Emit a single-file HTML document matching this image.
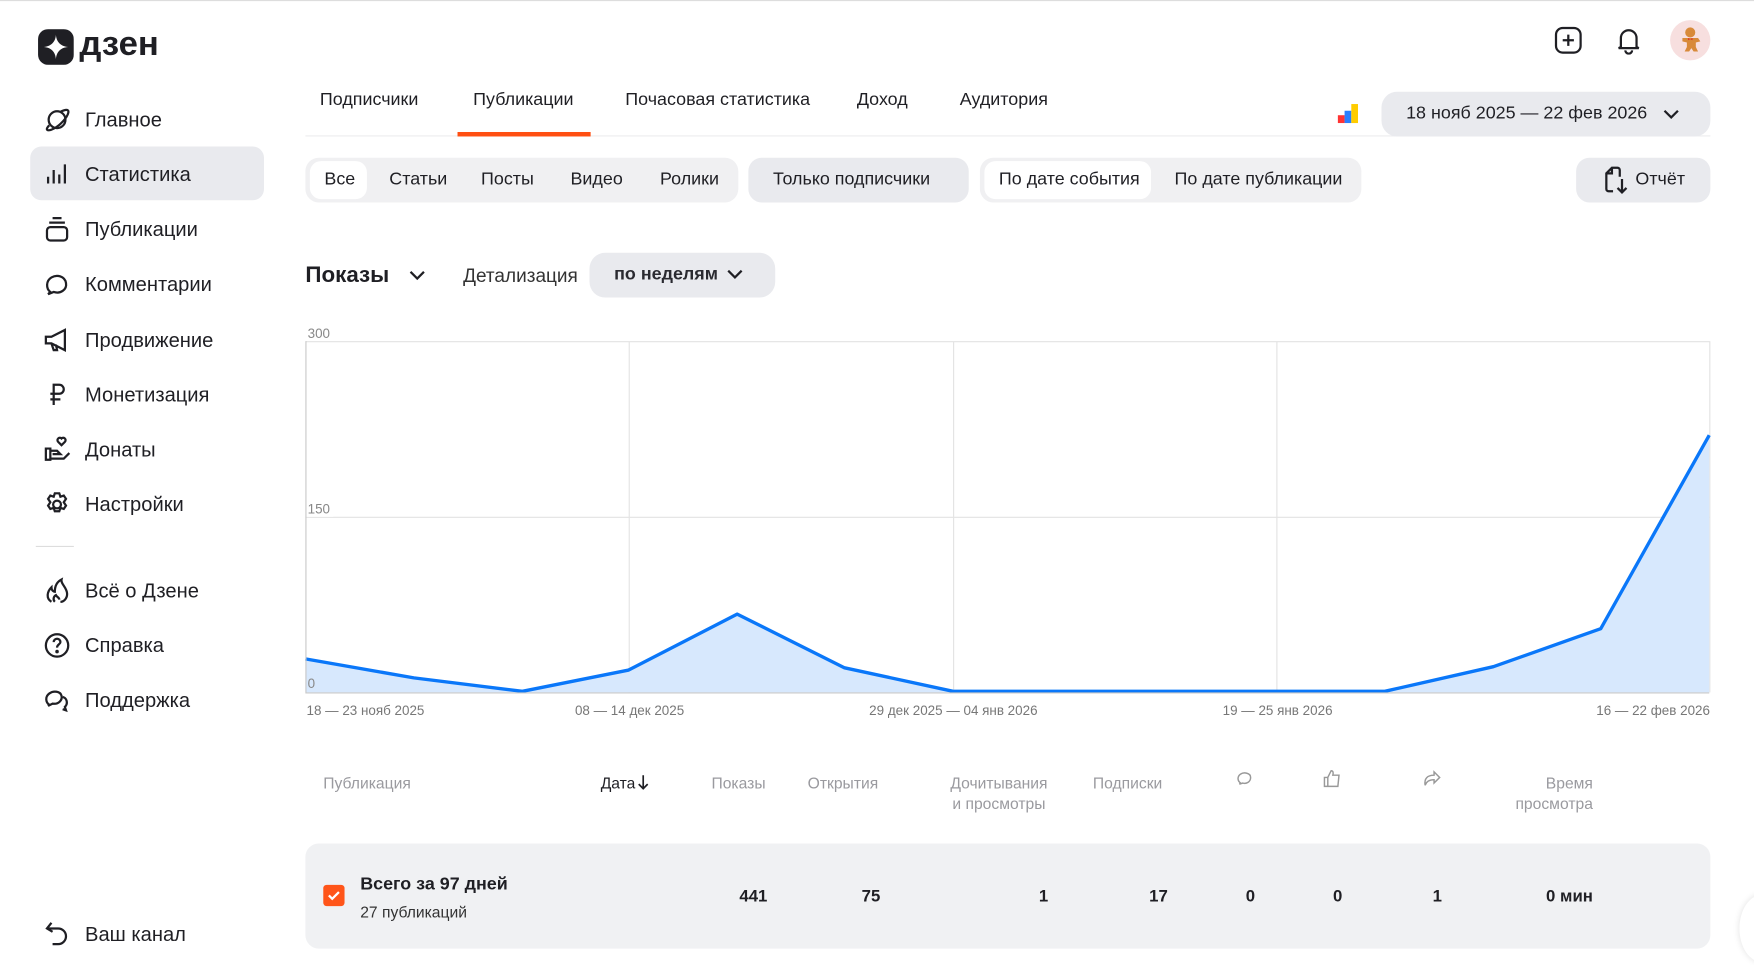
<!DOCTYPE html>
<html><head><meta charset="utf-8">
<style>
html,body{margin:0;padding:0;width:1754px;height:965px;overflow:hidden;background:#fff}
#st{position:absolute;left:0;top:0;width:1568px;height:863px;transform:scale(1.11862);transform-origin:0 0;font-family:"Liberation Sans","DejaVu Sans",sans-serif;color:#1f1f24}
.a{position:absolute;white-space:nowrap}
.nav{font-size:18px;line-height:22px}
.ic{position:absolute;width:26px;height:26px}
.tab{font-size:16px;top:80px;line-height:20px}
.f{font-size:16px;line-height:20px;top:151px}
.ax{font-size:12px;color:#777;top:628px}
.th{font-size:14px;color:#9a9a9f;line-height:18px}
.v{font-size:15px;font-weight:bold;top:793px;text-align:right}
</style></head><body><div id="st">
<div class="a" style="left:0;top:0;width:1568px;height:1px;background:#ddd"></div>
<svg class="a" style="left:34px;top:26px" width="32" height="32" viewBox="0 0 32 32"><rect width="32" height="32" rx="9" fill="#1f1f24"/><path d="M16 5C16.3 11.5 20.5 15.7 27 16C20.5 16.3 16.3 20.5 16 27C15.7 20.5 11.5 16.3 5 16C11.5 15.7 15.7 11.5 16 5Z" fill="#fff"/></svg>
<div class="a" style="left:71px;top:20px;font-size:31px;font-weight:bold;line-height:38px">дзен</div>
<div class="a" style="left:27px;top:131px;width:209px;height:48px;background:#e9eaee;border-radius:10px"></div>
<svg class="ic" style="left:38px;top:94px" viewBox="0 0 26 26" fill="none" stroke="#1f1f24" stroke-width="2"><circle cx="13" cy="13" r="7.5"/><path d="M6 18c-4 4-2 6 4 3s12-10 13-14-3-3-7-1"/></svg>
<div class="a nav" style="left:76px;top:96px">Главное</div>
<svg class="ic" style="left:38px;top:143px" viewBox="0 0 26 26" stroke="#1f1f24" stroke-width="2"><path d="M5 21v-6M10 21V9M15 21v-8M20 21V4"/></svg>
<div class="a nav" style="left:76px;top:145px">Статистика</div>
<svg class="ic" style="left:38px;top:192px" viewBox="0 0 26 26" fill="none" stroke="#1f1f24" stroke-width="2"><rect x="4" y="11" width="18" height="12" rx="3"/><path d="M6 7h14M9 3h8"/></svg>
<div class="a nav" style="left:76px;top:194px">Публикации</div>
<svg class="ic" style="left:38px;top:241px" viewBox="0 0 26 26" fill="none" stroke="#1f1f24" stroke-width="2"><path d="M7 20c-4-3-4-10 1-13s12-1 13 5-5 10-11 8l-5 2z"/></svg>
<div class="a nav" style="left:76px;top:243px">Комментарии</div>
<svg class="ic" style="left:38px;top:291px" viewBox="0 0 26 26" fill="none" stroke="#1f1f24" stroke-width="2"><path d="M3 10h5l12-6v18L8 16H3zM8 16l2 6h3l-1-5"/></svg>
<div class="a nav" style="left:76px;top:293px">Продвижение</div>
<svg class="ic" style="left:38px;top:340px" viewBox="0 0 26 26" fill="none" stroke="#1f1f24" stroke-width="2"><path d="M10 22V4h5a4 4 0 010 8H7M7 17h9"/></svg>
<div class="a nav" style="left:76px;top:342px">Монетизация</div>
<svg class="ic" style="left:38px;top:389px" viewBox="0 0 26 26" fill="none" stroke="#1f1f24" stroke-width="2"><path d="M3 12h4v10H3zM7 14h6l3 3H9M7 21h12l5-5M17 9l-3-3a2 2 0 013-3 2 2 0 013 3z"/></svg>
<div class="a nav" style="left:76px;top:391px">Донаты</div>
<svg class="ic" style="left:38px;top:438px" viewBox="0 0 26 26" fill="none" stroke="#1f1f24" stroke-width="2"><circle cx="13" cy="13" r="3.5"/><path d="M11 3h4l1 3 3-1 2 3-2 3 2 3-2 3-3-1-1 3h-4l-1-3-3 1-2-3 2-3-2-3 2-3 3 1z"/></svg>
<div class="a nav" style="left:76px;top:440px">Настройки</div>
<div class="a" style="left:32px;top:488px;width:34px;height:1px;background:#ddd"></div>
<svg class="ic" style="left:38px;top:515px" viewBox="0 0 26 26" fill="none" stroke="#1f1f24" stroke-width="2"><path d="M8 23c-5-3-4-9 0-13 0 3 2 4 3 4 0-5 2-9 6-11-1 4 5 7 5 13 0 4-3 7-6 7M11 23c-2-2-1-5 1-6 1 2 3 2 3 4"/></svg>
<div class="a nav" style="left:76px;top:517px">Всё о Дзене</div>
<svg class="ic" style="left:38px;top:564px" viewBox="0 0 26 26" fill="none" stroke="#1f1f24" stroke-width="2"><circle cx="13" cy="13" r="10"/><path d="M10 10a3 3 0 116 0c0 2-3 2-3 5"/><circle cx="13" cy="18.5" r=".6" fill="#1f1f24"/></svg>
<div class="a nav" style="left:76px;top:566px">Справка</div>
<svg class="ic" style="left:38px;top:613px" viewBox="0 0 26 26" fill="none" stroke="#1f1f24" stroke-width="2"><path d="M6 17c-3-2-4-7 0-10s10-2 11 2-3 8-8 7l-4 2z"/><path d="M18 10c4 1 5 6 2 9l1 3-3-1"/></svg>
<div class="a nav" style="left:76px;top:615px">Поддержка</div>
<svg class="ic" style="left:38px;top:822px" viewBox="0 0 26 26" fill="none" stroke="#1f1f24" stroke-width="2"><path d="M8 3L4 8l5 3M4 8h10a7 7 0 010 14H9"/></svg>
<div class="a nav" style="left:76px;top:824px">Ваш канал</div>
<svg class="a" style="left:1389px;top:23px" width="26" height="26" viewBox="0 0 26 26" fill="none" stroke="#1f1f24" stroke-width="2"><rect x="2" y="2" width="22" height="22" rx="6"/><path d="M13 8v10M8 13h10"/></svg>
<svg class="a" style="left:1443px;top:23px" width="26" height="26" viewBox="0 0 26 26" fill="none" stroke="#1f1f24" stroke-width="2"><path d="M6 19V11a7 7 0 0114 0v8l2 1H4zM10 22a3 3 0 006 0"/></svg>
<div class="a" style="left:1493px;top:18px;width:36px;height:36px;border-radius:50%;background:#f7dfdf;text-align:center;line-height:36px;font-size:20px">
<svg width="22" height="24" viewBox="0 0 22 24" style="margin-top:6px"><circle cx="11" cy="5" r="4.5" fill="#d88a3a"/><path d="M4 10h14l2 3-4 1v4l2 4h-4l-2-3-2 3H6l2-4v-4l-4-1z" fill="#d88a3a"/><path d="M9 10l2 1 2-1v2l-2-1-2 1z" fill="#e0302a"/></svg></div>
<div class="a tab" style="left:286px">Подписчики</div>
<div class="a tab" style="left:423px">Публикации</div>
<div class="a tab" style="left:559px">Почасовая статистика</div>
<div class="a tab" style="left:766px">Доход</div>
<div class="a tab" style="left:858px">Аудитория</div>
<div class="a" style="left:273px;top:121px;width:1256px;height:1px;background:#ececef"></div>
<div class="a" style="left:409px;top:118px;width:119px;height:4px;background:#ff4f12"></div>
<div class="a" style="left:1196px;top:103px;width:6px;height:7px;background:#f33"></div>
<div class="a" style="left:1202px;top:99px;width:6px;height:11px;background:#2a7fff"></div>
<div class="a" style="left:1208px;top:93px;width:6px;height:17px;background:#fc0"></div>
<div class="a" style="left:1235px;top:82px;width:294px;height:40px;background:#e9eaee;border-radius:14px"></div>
<div class="a" style="left:1257px;top:92px;font-size:16px;line-height:20px">18 нояб 2025 — 22 фев 2026</div>
<svg class="a" style="left:1486px;top:94px" width="16" height="16" viewBox="0 0 16 16" fill="none" stroke="#1f1f24" stroke-width="2"><path d="M2 5l6 6 6-6"/></svg>
<div class="a" style="left:273px;top:141px;width:387px;height:40px;background:#f0f0f2;border-radius:12px"></div>
<div class="a" style="left:277px;top:144px;width:51px;height:34px;background:#fff;border-radius:10px"></div>
<div class="a f" style="left:290px">Все</div>
<div class="a f" style="left:348px">Статьи</div>
<div class="a f" style="left:430px">Посты</div>
<div class="a f" style="left:510px">Видео</div>
<div class="a f" style="left:590px">Ролики</div>
<div class="a" style="left:669px;top:141px;width:197px;height:40px;background:#e9eaee;border-radius:12px"></div>
<div class="a f" style="left:691px">Только подписчики</div>
<div class="a" style="left:876px;top:141px;width:341px;height:40px;background:#f0f0f2;border-radius:12px"></div>
<div class="a" style="left:880px;top:144px;width:149px;height:34px;background:#fff;border-radius:10px"></div>
<div class="a f" style="left:893px">По дате события</div>
<div class="a f" style="left:1050px">По дате публикации</div>
<div class="a" style="left:1409px;top:141px;width:120px;height:40px;background:#e9eaee;border-radius:12px"></div>
<svg class="a" style="left:1433px;top:147px" width="24" height="28" viewBox="0 0 24 28" fill="none" stroke="#1f1f24" stroke-width="2"><path d="M9 24H5a2 2 0 01-2-2V8l5-5h5a2 2 0 012 2v6M8 3v5H3M17 13v12M13 21l4 4 4-4"/></svg>
<div class="a f" style="left:1462px">Отчёт</div>
<div class="a" style="left:273px;top:234px;font-size:20px;font-weight:bold;line-height:24px">Показы</div>
<svg class="a" style="left:365px;top:239px" width="16" height="14" viewBox="0 0 16 14" fill="none" stroke="#1f1f24" stroke-width="2"><path d="M2 4l6 6 6-6"/></svg>
<div class="a" style="left:414px;top:237px;font-size:17px;line-height:20px;color:#333">Детализация</div>
<div class="a" style="left:527px;top:226px;width:166px;height:40px;background:#e9eaee;border-radius:14px"></div>
<div class="a" style="left:549px;top:236px;font-size:16px;line-height:20px;font-weight:bold;color:#2a2a30">по неделям</div>
<svg class="a" style="left:649px;top:238px" width="16" height="14" viewBox="0 0 16 14" fill="none" stroke="#1f1f24" stroke-width="2"><path d="M2 4l6 6 6-6"/></svg>
<svg class="a" style="left:0;top:0" width="1568" height="660" viewBox="0 0 1568 660">
<g stroke="#e3e3e3" stroke-width="1" fill="none"><path d="M273.5 305.5H1528.5V619M562.5 305V619M852.5 305V619M1141.5 305V619M273 462.5H1528"/></g>
<path d="M273 589L370 606L467 618L562 599L659 549L755 597L852 618L948 618L1045 618L1141 618L1238 618L1335 596L1431 562L1528 389V619H273Z" fill="#d7e8fd"/>
<path d="M273 589L370 606L467 618L562 599L659 549L755 597L852 618L948 618L1045 618L1141 618L1238 618L1335 596L1431 562L1528 389" fill="none" stroke="#0a77f9" stroke-width="3" stroke-linejoin="round"/>
<path d="M273.5 305V619.5H1528" fill="none" stroke="#c8c8c8" stroke-width="1"/>
<g font-family="Liberation Sans,sans-serif" font-size="12" fill="#888"><rect x="274" y="448" width="24" height="14" fill="#fff"/><text x="275" y="302">300</text><text x="275" y="459">150</text><text x="275" y="615">0</text></g>
</svg>
<div class="a ax" style="left:274px">18 — 23 нояб 2025</div>
<div class="a ax" style="left:514px">08 — 14 дек 2025</div>
<div class="a ax" style="left:777px">29 дек 2025 — 04 янв 2026</div>
<div class="a ax" style="left:1093px">19 — 25 янв 2026</div>
<div class="a ax" style="left:1427px">16 — 22 фев 2026</div>
<div class="a th" style="left:289px;top:691px">Публикация</div>
<div class="a th" style="left:537px;top:691px;color:#1f1f24">Дата</div>
<svg class="a" style="left:569px;top:691px" width="12" height="16" viewBox="0 0 12 16" fill="none" stroke="#1f1f24" stroke-width="1.5"><path d="M6 2v12M2 10l4 4 4-4"/></svg>
<div class="a th" style="left:636px;top:691px">Показы</div>
<div class="a th" style="left:722px;top:691px">Открытия</div>
<div class="a th" style="left:833px;top:691px;width:120px;text-align:center">Дочитывания<br>и просмотры</div>
<div class="a th" style="left:977px;top:691px">Подписки</div>
<svg class="a" style="left:1105px;top:688px" width="16" height="16" viewBox="0 0 16 16" fill="none" stroke="#999" stroke-width="1.3"><path d="M4 12c-3-2-3-6 0-8s9-1 9 3-4 6-7 5l-3 1z"/></svg>
<svg class="a" style="left:1182px;top:687px" width="18" height="18" viewBox="0 0 18 18" fill="none" stroke="#999" stroke-width="1.3"><path d="M2 8h3v8H2zM5 8l3-6c2 0 2 2 1.5 4H15l-1 10H5"/></svg>
<svg class="a" style="left:1271px;top:688px" width="18" height="16" viewBox="0 0 18 16" fill="none" stroke="#999" stroke-width="1.3"><path d="M11 2l5 5-5 5V9C6 9 4 11 3 14 2 8 5 5 11 5z"/></svg>
<div class="a th" style="left:1324px;top:691px;width:100px;text-align:right">Время<br>просмотра</div>
<div class="a" style="left:273px;top:754px;width:1256px;height:94px;background:#f0f1f3;border-radius:12px"></div>
<div class="a" style="left:289px;top:791px;width:19px;height:19px;background:#ff5519;border-radius:3px"></div>
<svg class="a" style="left:292px;top:794px" width="13" height="13" viewBox="0 0 13 13" fill="none" stroke="#fff" stroke-width="2"><path d="M2 6.5l3 3 6-6"/></svg>
<div class="a" style="left:322px;top:781px;font-size:16px;font-weight:bold;line-height:20px">Всего за 97 дней</div>
<div class="a" style="left:322px;top:806px;font-size:14px;line-height:18px;color:#333">27 публикаций</div>
<div class="a v" style="left:606px;width:80px">441</div>
<div class="a v" style="left:707px;width:80px">75</div>
<div class="a v" style="left:857px;width:80px">1</div>
<div class="a v" style="left:964px;width:80px">17</div>
<div class="a v" style="left:1042px;width:80px">0</div>
<div class="a v" style="left:1120px;width:80px">0</div>
<div class="a v" style="left:1209px;width:80px">1</div>
<div class="a v" style="left:1324px;width:100px">0 мин</div>
<div class="a" style="left:1555px;top:800px;width:40px;height:60px;border-radius:50%;background:#fff;box-shadow:0 0 6px rgba(0,0,0,.12)"></div>
</div></body></html>
